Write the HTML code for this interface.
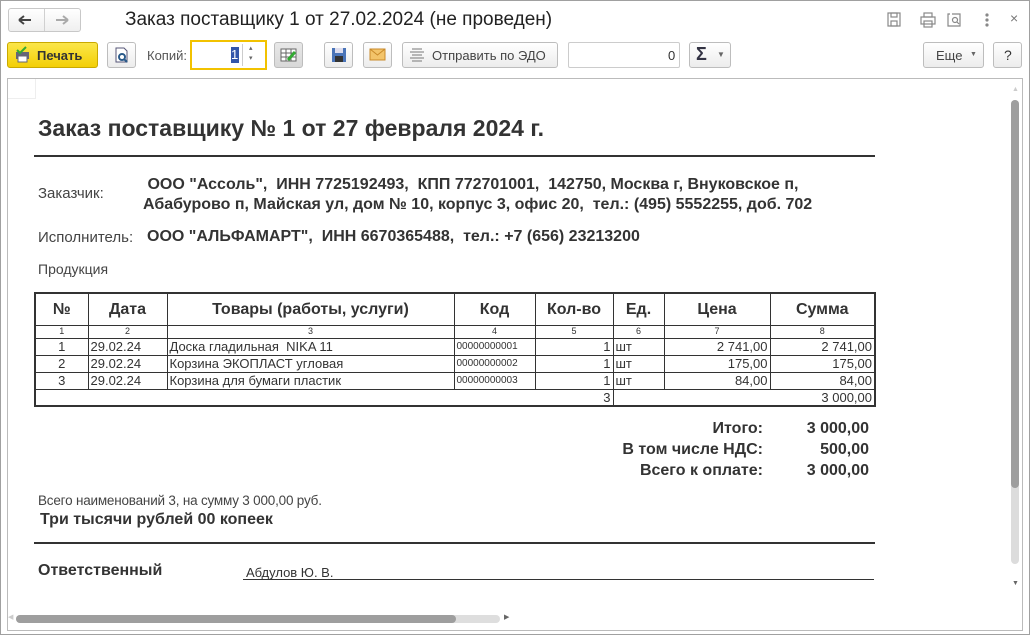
<!DOCTYPE html>
<html><head><meta charset="utf-8"><style>
*{margin:0;padding:0;box-sizing:border-box}
body{width:1030px;height:635px;overflow:hidden;background:#fff;font-family:"Liberation Sans",Arial,sans-serif;color:#333;position:relative}
.a{position:absolute;white-space:nowrap}
.btn{position:absolute;border:1px solid #bdbdbd;border-radius:3px;background:linear-gradient(#fff,#ececec);height:26px;top:42px}
.b{font-weight:bold}
table{position:absolute;left:34px;top:292px;border-collapse:collapse;border:2px solid #333;font-size:13px}
td{border:1px solid #333;padding:0 2px;height:17px;line-height:15px}
.h td{height:32px;font-weight:bold;font-size:16px;text-align:center;border-bottom:1px solid #333}
.n td{font-size:9px;text-align:center;height:13px;line-height:11px}
.r{text-align:right}.c{text-align:center}
</style></head><body>
<div class="a" style="left:0;top:0;width:1030px;height:635px;border:1px solid #a0a0a0"></div>
<!-- nav -->
<div class="a" style="left:8px;top:8px;width:73px;height:24px;border:1px solid #c8c8c8;border-radius:3px;background:linear-gradient(#fff,#efefef)"></div>
<div class="a" style="left:44px;top:9px;width:1px;height:22px;background:#d0d0d0"></div>
<svg class="a" style="left:16px;top:13px" width="60" height="14"><path d="M3 7h12M3 7l5-4M3 7l5 4" stroke="#444" stroke-width="2" fill="none"/><path d="M40 7h12M52 7l-5-4M52 7l-5 4" stroke="#aaa" stroke-width="2" fill="none"/></svg>
<div class="a" style="left:125px;top:9px;font-size:19px;color:#222">Заказ поставщику 1 от 27.02.2024 (не проведен)</div>
<!-- top right icons -->
<svg class="a" style="left:885px;top:10px" width="110" height="20" viewBox="0 0 110 20" fill="none" stroke="#888" stroke-width="1.2">
<rect x="3" y="3" width="12" height="13"/><rect x="6" y="3" width="6" height="4"/><rect x="6" y="11" width="6" height="5"/>
<rect x="36" y="7" width="14" height="7"/><rect x="39" y="3" width="8" height="4"/><rect x="39" y="11" width="8" height="6"/>
<path d="M67 4h8v12h-12v-12h2"/><circle cx="70" cy="10" r="2.5"/><path d="M72 12l2 2"/>
<circle cx="102" cy="5" r="1" fill="#888"/><circle cx="102" cy="10" r="1" fill="#888"/><circle cx="102" cy="15" r="1" fill="#888"/>
</svg>
<div class="a" style="left:1010px;top:10px;font-size:14px;color:#777">×</div>
<!-- toolbar -->
<div class="btn" style="left:7px;width:91px;background:linear-gradient(#fbe64a,#f3cf06);border-color:#c9a900"></div>
<svg class="a" style="left:13px;top:46px" width="20" height="18"><rect x="3" y="6" width="13" height="7" fill="#667" /><rect x="5" y="10" width="9" height="6" fill="#fff" stroke="#667"/><path d="M4 4l3 3 6-6" stroke="#3a3" stroke-width="2" fill="none"/></svg>
<div class="a b" style="left:37px;top:48px;font-size:13px;color:#333">Печать</div>
<div class="btn" style="left:107px;width:29px"></div>
<svg class="a" style="left:113px;top:46px" width="18" height="18"><path d="M3 2h8l3 3v11h-11z" fill="#fff" stroke="#557"/><circle cx="9" cy="11" r="3" stroke="#2a5a8a" stroke-width="2" fill="none"/><path d="M11 13l3 3" stroke="#2a5a8a" stroke-width="2"/></svg>
<div class="a" style="left:147px;top:48px;font-size:13px;color:#555">Копий:</div>
<div class="a" style="left:190px;top:40px;width:77px;height:30px;border:2px solid #f2c200;background:#fff"></div>
<div class="a" style="left:231px;top:47px;width:8px;height:16px;background:#3355aa;color:#fff;font-size:13px;line-height:16px">1</div>
<div class="a" style="left:242px;top:44px;width:1px;height:22px;background:#ccc"></div>
<div class="a" style="left:249px;top:44px;font-size:7px;color:#666;line-height:10px">▴<br>▾</div>
<div class="btn" style="left:274px;width:29px;background:linear-gradient(#e8e8e8,#d8d8d8)"></div>
<svg class="a" style="left:280px;top:47px" width="18" height="16"><rect x="1" y="2" width="15" height="12" fill="#fff" stroke="#666"/><path d="M1 6h15M1 10h15M6 2v12M11 2v12" stroke="#666"/><path d="M8 13l7-8" stroke="#3a3" stroke-width="3"/></svg>
<div class="btn" style="left:324px;width:29px"></div>
<svg class="a" style="left:331px;top:47px" width="16" height="16"><rect x="1" y="1" width="14" height="14" fill="#4a74b8"/><rect x="4" y="1" width="8" height="5" fill="#dde"/><rect x="4" y="9" width="8" height="6" fill="#333"/></svg>
<div class="btn" style="left:363px;width:29px"></div>
<svg class="a" style="left:369px;top:48px" width="18" height="14"><rect x="1" y="1" width="15" height="11" fill="#f3c46a" stroke="#c98a2a"/><path d="M1 1l7.5 6 7.5-6" stroke="#c98a2a" fill="none"/></svg>
<div class="btn" style="left:402px;width:156px"></div>
<svg class="a" style="left:408px;top:47px" width="18" height="16" fill="none" stroke="#777"><path d="M4 2h10M2 5h14M4 8h10M2 11h14M4 14h10"/></svg>
<div class="a" style="left:432px;top:48px;font-size:13px;color:#444">Отправить по ЭДО</div>
<div class="a" style="left:568px;top:42px;width:112px;height:26px;border:1px solid #ccc;border-radius:2px;background:#fff"></div>
<div class="a" style="left:668px;top:48px;font-size:13px;color:#333">0</div>
<div class="btn" style="left:689px;width:42px"></div>
<div class="a b" style="left:696px;top:44px;font-size:18px;color:#334">Σ</div>
<div class="a" style="left:717px;top:50px;font-size:8px;color:#666">▼</div>
<div class="btn" style="left:923px;width:61px"></div>
<div class="a" style="left:936px;top:48px;font-size:13px;color:#444">Еще</div>
<div class="a" style="left:970px;top:51px;font-size:7px;color:#666">▼</div>
<div class="btn" style="left:993px;width:29px"></div>
<div class="a" style="left:1004px;top:47px;font-size:14px;color:#333">?</div>
<!-- document area -->
<div class="a" style="left:7px;top:78px;width:1016px;height:553px;border:1px solid #bbb"></div>
<div class="a" style="left:8px;top:79px;width:28px;height:20px;border-right:1px solid #eee;border-bottom:1px solid #eee"></div>
<div class="a" style="left:1012px;top:86px;font-size:7px;color:#ccc">▲</div>
<div class="a" style="left:1012px;top:580px;font-size:7px;color:#666">▼</div>
<div class="a" style="left:1011px;top:100px;width:8px;height:464px;background:#dcdcdc;border-radius:4px"></div>
<div class="a" style="left:1011px;top:100px;width:8px;height:388px;background:#9e9e9e;border-radius:4px"></div>
<div class="a" style="left:16px;top:615px;width:484px;height:8px;background:#dedede;border-radius:4px"></div>
<div class="a" style="left:16px;top:615px;width:440px;height:8px;background:#9e9e9e;border-radius:4px"></div>
<div class="a" style="left:8px;top:613px;font-size:7px;color:#ccc">◀</div>
<div class="a" style="left:504px;top:613px;font-size:7px;color:#666">▶</div>
<!-- content -->
<div class="a b" style="left:38px;top:115px;font-size:23px;color:#333">Заказ поставщику № 1 от 27 февраля 2024 г.</div>
<div class="a" style="left:34px;top:155px;width:841px;height:2px;background:#333"></div>
<div class="a" style="left:38px;top:185px;font-size:15px;color:#444">Заказчик:</div>
<div class="a b" style="left:143px;top:175px;font-size:16px;color:#333;line-height:20px;white-space:pre"> ООО "Ассоль",  ИНН 7725192493,  КПП 772701001,  142750, Москва г, Внуковское п,
Абабурово п, Майская ул, дом № 10, корпус 3, офис 20,  тел.: (495) 5552255, доб. 702</div>
<div class="a" style="left:38px;top:229px;font-size:15px;color:#444">Исполнитель:</div>
<div class="a b" style="left:147px;top:228px;font-size:16px;color:#333;white-space:pre">ООО "АЛЬФАМАРТ",  ИНН 6670365488,  тел.: +7 (656) 23213200</div>
<div class="a" style="left:38px;top:261px;font-size:14px;color:#444">Продукция</div>
<table>
<colgroup><col style="width:53px"><col style="width:79px"><col style="width:287px"><col style="width:81px"><col style="width:78px"><col style="width:51px"><col style="width:106px"><col style="width:105px"></colgroup>
<tr class="h"><td>№</td><td>Дата</td><td>Товары (работы, услуги)</td><td>Код</td><td>Кол-во</td><td>Ед.</td><td>Цена</td><td>Сумма</td></tr>
<tr class="n"><td>1</td><td>2</td><td>3</td><td>4</td><td>5</td><td>6</td><td>7</td><td>8</td></tr>
<tr><td class="c">1</td><td>29.02.24</td><td>Доска гладильная &nbsp;NIKA 11</td><td style="font-size:10px">00000000001</td><td class="r">1</td><td>шт</td><td class="r">2 741,00</td><td class="r">2 741,00</td></tr>
<tr><td class="c">2</td><td>29.02.24</td><td>Корзина ЭКОПЛАСТ угловая</td><td style="font-size:10px">00000000002</td><td class="r">1</td><td>шт</td><td class="r">175,00</td><td class="r">175,00</td></tr>
<tr><td class="c">3</td><td>29.02.24</td><td>Корзина для бумаги пластик</td><td style="font-size:10px">00000000003</td><td class="r">1</td><td>шт</td><td class="r">84,00</td><td class="r">84,00</td></tr>
<tr><td colspan="5" class="r" style="border-left:none">3</td><td colspan="3" class="r">3 000,00</td></tr>
</table>
<div class="a b" style="left:563px;top:418px;width:200px;text-align:right;font-size:16px;line-height:21px;color:#333">Итого:<br>В том числе НДС:<br>Всего к оплате:</div>
<div class="a b" style="left:770px;top:418px;width:99px;text-align:right;font-size:16px;line-height:21px;color:#333">3 000,00<br>500,00<br>3 000,00</div>
<div class="a" style="left:38px;top:493px;font-size:13.5px;color:#444;letter-spacing:-0.2px">Всего наименований 3, на сумму 3 000,00 руб.</div>
<div class="a b" style="left:40px;top:511px;font-size:16px;color:#333">Три тысячи рублей 00 копеек</div>
<div class="a" style="left:34px;top:542px;width:841px;height:2px;background:#333"></div>
<div class="a b" style="left:38px;top:562px;font-size:16px;color:#333">Ответственный</div>
<div class="a" style="left:246px;top:565px;font-size:13px;color:#333">Абдулов Ю. В.</div>
<div class="a" style="left:243px;top:579px;width:631px;height:1px;background:#333"></div>
</body></html>
